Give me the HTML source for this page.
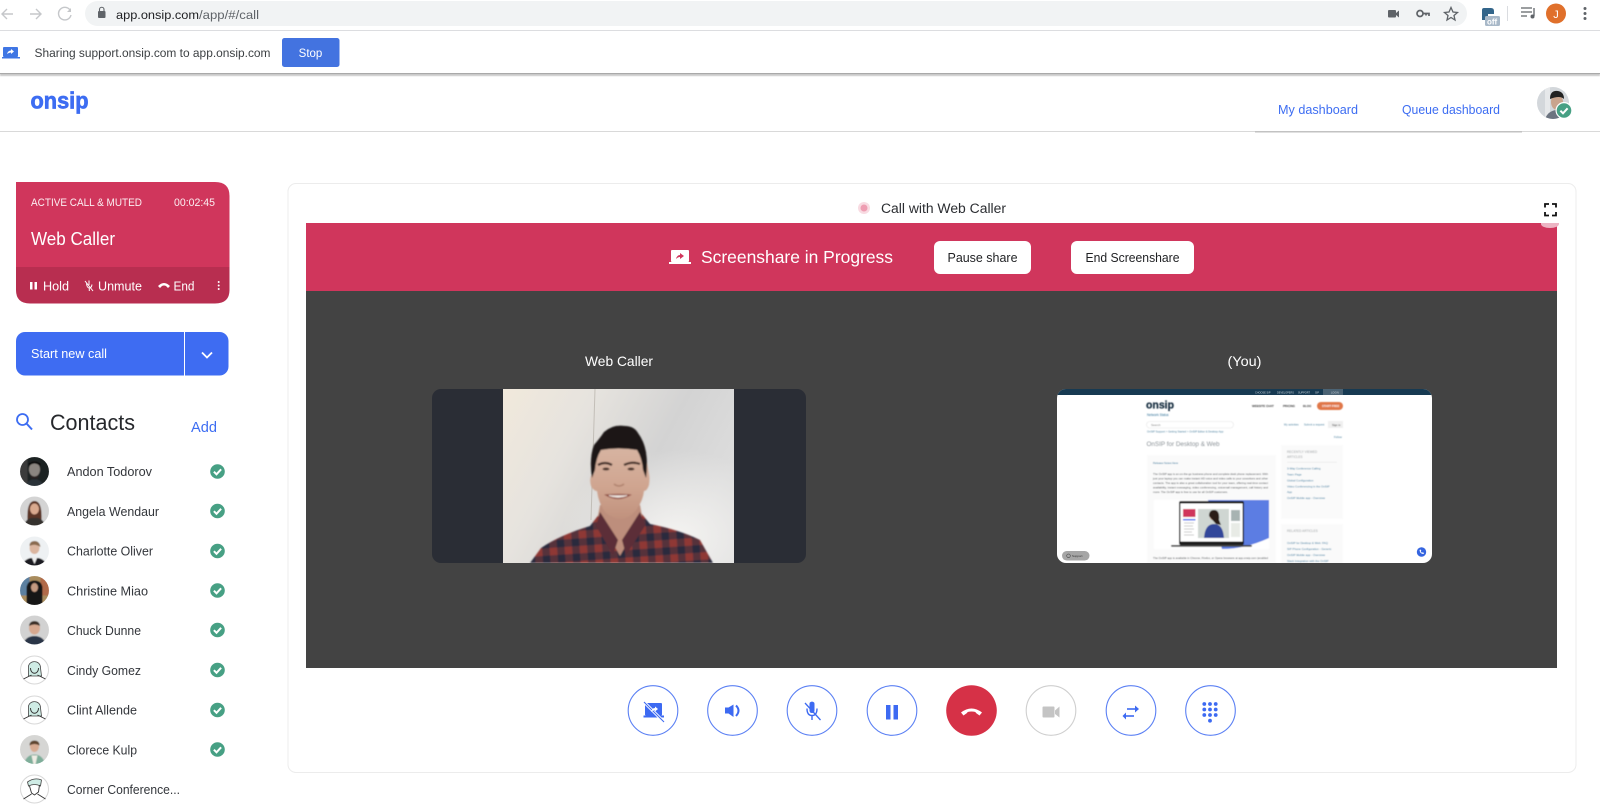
<!DOCTYPE html>
<html><head><meta charset="utf-8"><title>OnSIP</title>
<style>
html,body{margin:0;padding:0;width:1600px;height:811px;overflow:hidden;background:#fff}
svg{display:block;font-family:"Liberation Sans",sans-serif}
text{white-space:pre}
</style></head><body>
<svg width="1600" height="811" viewBox="0 0 1600 811" xmlns="http://www.w3.org/2000/svg">
<defs>
<filter id="b1" x="-20%" y="-20%" width="140%" height="140%"><feGaussianBlur stdDeviation="0.5"/></filter>
<filter id="bm" x="-10%" y="-10%" width="120%" height="120%"><feGaussianBlur stdDeviation="0.8"/></filter>
<filter id="bt" x="-5%" y="-5%" width="110%" height="110%"><feGaussianBlur stdDeviation="0.4"/></filter>
<linearGradient id="wall" x1="0" y1="0" x2="1" y2="0.4"><stop offset="0" stop-color="#f1e9dc"/><stop offset=".35" stop-color="#e6e3de"/><stop offset=".7" stop-color="#d3d3d3"/><stop offset="1" stop-color="#dcdcdc"/></linearGradient>
<radialGradient id="wall2" cx=".75" cy=".85" r=".5"><stop offset="0" stop-color="#f4f3f1"/><stop offset="1" stop-color="#f4f3f1" stop-opacity="0"/></radialGradient>
<linearGradient id="skin" x1="0" y1="0" x2="0" y2="1"><stop offset="0" stop-color="#d8b6a4"/><stop offset=".6" stop-color="#cfa48f"/><stop offset="1" stop-color="#c0917d"/></linearGradient>
<pattern id="plaid" width="15" height="15" patternUnits="userSpaceOnUse" patternTransform="rotate(-4)"><rect width="15" height="15" fill="#57303a"/><rect width="7.500" height="7.500" fill="#8f3935"/><rect x="7.500" y="7.500" width="7.500" height="7.500" fill="#2a2b3e"/></pattern>
<clipPath id="t1"><rect x="432" y="389" width="374" height="174" rx="9"/></clipPath>
<clipPath id="t2"><rect x="1057" y="389" width="375" height="174" rx="9"/></clipPath>
<clipPath id="p"><rect x="503" y="389" width="231" height="174"/></clipPath>
<clipPath id="ca"><circle cx="0" cy="0" r="14.500"/></clipPath>
<clipPath id="me"><circle cx="1553" cy="103" r="16"/></clipPath>
<g id="ok"><circle r="7.300" fill="#47a084"/><path d="M-3.600 .2 -1 2.800 3.600-2.200" fill="none" stroke="#fff" stroke-width="2"/></g>
<g id="fa"><circle r="14" fill="#fff" stroke="#d8d8d8"/><path d="M-6 -2C-7-10 6-11 6-2L7 6-6 6Z" fill="#cfece5" stroke="#444" stroke-width=".8"/><path d="M-4-2C-4 5 4 5 4-2M-3 5-11 9M3 5 11 9" fill="none" stroke="#333" stroke-width=".9"/></g>
</defs>

<!-- browser bar -->
<rect width="1600" height="31" fill="#fff"/>
<rect x="0" y="30" width="1600" height="1" fill="#dcdde0"/>
<rect x="85" y="1" width="1382" height="25" rx="12.500" fill="#f1f3f4"/>
<g fill="none" stroke="#c5c7ca" stroke-width="1.400">
<path d="M13 14H2M7 9 2 14 7 19"/><path d="M30 14H41M36 9 41 14 36 19"/>
<path d="M70 10A6.300 6.300 0 1 0 71 15"/></g>
<path d="M71 8V12H67Z" fill="#c5c7ca"/>
<rect x="98" y="11" width="7.500" height="7" rx="1" fill="#5f6368"/><path d="M99.500 11V9.500A2.200 2.200 0 0 1 104 9.500V11" fill="none" stroke="#5f6368" stroke-width="1.100"/>
<text x="116" y="19" font-size="12.300" fill="#202124" textLength="83" lengthAdjust="spacingAndGlyphs">app.onsip.com</text>
<text x="199" y="19" font-size="12.300" fill="#5f6368" textLength="60" lengthAdjust="spacingAndGlyphs">/app/#/call</text>
<rect x="1388" y="10" width="8" height="7.500" rx="1" fill="#5f6368"/><path d="M1396 13 1399 10.500V17.500L1396 15Z" fill="#5f6368"/>
<circle cx="1420" cy="13.500" r="3" fill="none" stroke="#5f6368" stroke-width="1.700"/><path d="M1423 13.500H1429V16M1426 13.500V15.500" fill="none" stroke="#5f6368" stroke-width="1.700"/>
<path d="M1451 7.500 1453 12 1457.500 12.500 1454 15.500 1455 20 1451 17.500 1447 20 1448 15.500 1444.500 12.500 1449 12Z" fill="none" stroke="#5f6368" stroke-width="1.300"/>
<path d="M1482 20V10Q1482 8 1484 8H1491Q1494 8 1494 11V14H1488V20Z" fill="#33658a"/>
<rect x="1485" y="16" width="15" height="10" rx="1.500" fill="#a8b8c8"/><text x="1487" y="24.500" font-size="8" font-weight="bold" fill="#fff">off</text>
<rect x="1507" y="6" width="1" height="15" fill="#dadce0"/>
<path d="M1521 8H1532M1521 12H1532M1521 16H1527" stroke="#5f6368" stroke-width="1.300" fill="none"/><path d="M1534 8V16" stroke="#5f6368" stroke-width="1.300"/><circle cx="1532.500" cy="16.500" r="2" fill="#5f6368"/>
<circle cx="1556" cy="13.500" r="10" fill="#e0702b"/><text x="1556" y="18" font-size="11" fill="#fff" text-anchor="middle">J</text>
<g fill="#5f6368"><circle cx="1585" cy="8.500" r="1.500"/><circle cx="1585" cy="13.500" r="1.500"/><circle cx="1585" cy="18.500" r="1.500"/></g>

<!-- sharing bar -->
<rect x="0" y="73" width="1600" height="3" fill="#c9c9c9" filter="url(#b1)"/>
<rect x="0" y="31" width="1600" height="43" fill="#fff"/>
<rect x="0" y="73" width="1600" height="1" fill="#a9a9a9"/>
<rect x="3" y="47" width="15" height="10" rx="1" fill="#3f76e4"/><rect x="2" y="57" width="18" height="1.500" fill="#3f76e4"/><path d="M7 54Q8 50.500 11 50.500V49L14 51.500 11 54V52.500Q9 52.500 7 54Z" fill="#fff"/>
<text x="34.500" y="57" font-size="12.300" fill="#3c4043" textLength="236" lengthAdjust="spacingAndGlyphs">Sharing support.onsip.com to app.onsip.com</text>
<rect x="282" y="38" width="57.500" height="29" rx="2.500" fill="#4373e0"/>
<text x="310.500" y="57" font-size="11.500" fill="#fff" text-anchor="middle">Stop</text>

<!-- header -->
<text x="30.500" y="108.300" font-size="23" font-weight="bold" fill="#3d6df2" stroke="#3d6df2" stroke-width=".7" textLength="58" lengthAdjust="spacingAndGlyphs">onsip</text>
<rect x="0" y="131" width="1600" height="1" fill="#d9d9d9"/>
<rect x="1255" y="131" width="267" height="1.500" fill="#c2c2c2"/>
<text x="1278" y="114" font-size="13" fill="#3d6df2" textLength="80" lengthAdjust="spacingAndGlyphs">My dashboard</text>
<text x="1402" y="114" font-size="13" fill="#3d6df2" textLength="98" lengthAdjust="spacingAndGlyphs">Queue dashboard</text>
<g clip-path="url(#me)"><rect x="1537" y="87" width="32" height="32" fill="#d3d7db"/><path d="M1545 87H1550V119H1545Z" fill="#e6e8ea"/><ellipse cx="1557" cy="102" rx="6" ry="8" fill="#c9a48d"/><path d="M1550 99Q1550 90 1558 91 1564 92 1564 99 1560 95 1550 99Z" fill="#222"/><path d="M1545 119Q1548 111 1556 110L1566 119Z" fill="#6c7480"/></g>
<circle cx="1564" cy="110.500" r="8.500" fill="#fff"/><use href="#ok" x="1564" y="110.500"/>

<!-- active card -->
<path d="M16 182H215Q229.500 182 229.500 196V267H16Z" fill="#d0365c"/>
<path d="M16 267H229.500V290Q229.500 303.500 215 303.500H30Q16 303.500 16 290Z" fill="#b82e50"/>
<text x="31" y="206" font-size="10.800" fill="#fff" fill-opacity=".92" textLength="111" lengthAdjust="spacingAndGlyphs">ACTIVE CALL &amp; MUTED</text>
<text x="174" y="206" font-size="10.800" fill="#fff" fill-opacity=".92" textLength="41" lengthAdjust="spacingAndGlyphs">00:02:45</text>
<text x="31" y="245" font-size="18" fill="#fff" textLength="84" lengthAdjust="spacingAndGlyphs">Web Caller</text>
<rect x="30" y="282" width="2.500" height="7.500" fill="#fff"/><rect x="34.500" y="282" width="2.500" height="7.500" fill="#fff"/>
<text x="43" y="290.500" font-size="13" fill="#fff" textLength="26" lengthAdjust="spacingAndGlyphs">Hold</text>
<path d="M85 281 93 291M89 280.500V285M86.500 283.500Q87 288 89.300 288 91.500 288 92 284.500M89.300 288V291" stroke="#fff" stroke-width="1" fill="none"/>
<text x="98" y="290.500" font-size="13" fill="#fff" textLength="44" lengthAdjust="spacingAndGlyphs">Unmute</text>
<path d="M158 286Q164 280 170 286L168 288 166 286Q164 285 162 286L160 288Z" fill="#fff"/>
<text x="173.500" y="290.500" font-size="13" fill="#fff" textLength="21" lengthAdjust="spacingAndGlyphs">End</text>
<g fill="#fff"><circle cx="218.700" cy="282" r="1"/><circle cx="218.700" cy="285.500" r="1"/><circle cx="218.700" cy="289" r="1"/></g>

<!-- start new call -->
<rect x="16" y="332" width="212.500" height="43.500" rx="9" fill="#3e6cf2"/>
<rect x="184" y="332" width="1" height="43.500" fill="#fff"/>
<text x="31" y="358" font-size="12.800" fill="#fff" textLength="76" lengthAdjust="spacingAndGlyphs">Start new call</text>
<path d="M202 352.500 207 357.500 212 352.500" fill="none" stroke="#fff" stroke-width="1.800"/>

<!-- contacts header -->
<circle cx="22.500" cy="419.500" r="5.500" fill="none" stroke="#3d6df2" stroke-width="1.800"/><path d="M26.500 423.500 32 429.500" stroke="#3d6df2" stroke-width="2"/>
<text x="50" y="430" font-size="22" fill="#26282c" textLength="85" lengthAdjust="spacingAndGlyphs">Contacts</text>
<text x="191" y="432" font-size="15" fill="#3d6df2" textLength="26" lengthAdjust="spacingAndGlyphs">Add</text>

<!-- contacts -->
<g font-size="13" fill="#33363b">
<text x="67" y="476" textLength="85" lengthAdjust="spacingAndGlyphs">Andon Todorov</text>
<text x="67" y="516" textLength="92" lengthAdjust="spacingAndGlyphs">Angela Wendaur</text>
<text x="67" y="555.500" textLength="86" lengthAdjust="spacingAndGlyphs">Charlotte Oliver</text>
<text x="67" y="595.500" textLength="81" lengthAdjust="spacingAndGlyphs">Christine Miao</text>
<text x="67" y="635" textLength="74" lengthAdjust="spacingAndGlyphs">Chuck Dunne</text>
<text x="67" y="675" textLength="74" lengthAdjust="spacingAndGlyphs">Cindy Gomez</text>
<text x="67" y="714.500" textLength="70" lengthAdjust="spacingAndGlyphs">Clint Allende</text>
<text x="67" y="754.500" textLength="70" lengthAdjust="spacingAndGlyphs">Clorece Kulp</text>
<text x="67" y="794" textLength="113" lengthAdjust="spacingAndGlyphs">Corner Conference...</text>
</g>
<use href="#ok" x="217.500" y="471.500"/><use href="#ok" x="217.500" y="511"/><use href="#ok" x="217.500" y="551"/><use href="#ok" x="217.500" y="590.500"/><use href="#ok" x="217.500" y="630"/><use href="#ok" x="217.500" y="670"/><use href="#ok" x="217.500" y="710"/><use href="#ok" x="217.500" y="749.500"/>

<g transform="translate(34.500 471.500)"><g clip-path="url(#ca)"><g filter="url(#b1)"><rect x="-15" y="-15" width="30" height="30" fill="#1e2022"/><rect x="-15" y="-15" width="8" height="30" fill="#3a3a3a"/><ellipse cy="-2" rx="5.500" ry="7" fill="#8b8580"/><path d="M-6-5Q0-11 6-5L6-8Q0-12-6-8Z" fill="#111"/><path d="M-5 3Q0 7 5 3L3 7H-3Z" fill="#2a2421"/><path d="M-10 15Q-6 7 0 8 6 7 10 15Z" fill="#2b3138"/></g></g></g>
<g transform="translate(34.500 511)"><g clip-path="url(#ca)"><g filter="url(#b1)"><rect x="-15" y="-15" width="30" height="30" fill="#d4d4d4"/><path d="M-7 10Q-8-10 0-10 8-10 7 10Z" fill="#5b3426"/><ellipse cy="-2" rx="4.500" ry="5.500" fill="#d9a98e"/><path d="M-11 15Q-8 6 0 7 8 6 11 15Z" fill="#34302e"/></g></g></g>
<g transform="translate(34.500 551)"><g clip-path="url(#ca)"><g filter="url(#b1)"><rect x="-15" y="-15" width="30" height="30" fill="#eef1f3"/><ellipse cy="-3" rx="5" ry="6" fill="#dcb6a0"/><path d="M-5-5Q-5-10 0-10 5-10 6-4 0-8-5-5Z" fill="#8a6b4f"/><path d="M-13 15Q-9 6 0 7 9 6 13 15Z" fill="#1f1f22"/><path d="M-3 6H3L0 13Z" fill="#eee"/></g></g></g>
<g transform="translate(34.500 590.500)"><g clip-path="url(#ca)"><g filter="url(#b1)"><rect x="-15" y="-15" width="30" height="30" fill="#a98c5d"/><rect x="-15" y="-15" width="10" height="20" fill="#5c80a0"/><rect x="6" y="-15" width="9" height="20" fill="#b16a4a"/><path d="M-8 15V-3Q-7-10 0-10 7-10 8-3V15Z" fill="#141214"/><ellipse cy="-3" rx="3.500" ry="4.500" fill="#c49a80"/></g></g></g>
<g transform="translate(34.500 630)"><g clip-path="url(#ca)"><g filter="url(#b1)"><rect x="-15" y="-15" width="30" height="30" fill="#d2d2d2"/><ellipse cy="-2" rx="5.500" ry="6.500" fill="#d6a88f"/><path d="M-5.500-4Q-5-9 0-9 5-9 5.500-4 0-7-5.500-4Z" fill="#3a2f28"/><path d="M-12 15Q-9 6 0 6 9 6 12 15Z" fill="#2a3446"/></g></g></g>
<use href="#fa" x="34.500" y="670"/><use href="#fa" x="34.500" y="710"/>
<g transform="translate(34.500 749.500)"><g clip-path="url(#ca)"><g filter="url(#b1)"><rect x="-15" y="-15" width="30" height="30" fill="#d6d6d4"/><ellipse cy="-3" rx="4.500" ry="5.500" fill="#d8ab92"/><path d="M-5-4Q-5-9 0-9 5-9 5-4 0-7-5-4Z" fill="#5f442f"/><path d="M-11 15Q-8 5 0 5 8 5 11 15Z" fill="#7fae9a"/><path d="M-3 6H3L1 15H-1Z" fill="#efece4"/></g></g></g>
<g transform="translate(34.500 789)"><circle r="14" fill="#fff" stroke="#d8d8d8"/><path d="M-7-7Q0-12 7-9L6-3Q0-6-6-3Z" fill="#cfece5" stroke="#444" stroke-width=".8"/><path d="M-5-3 -3 4 0 6 4 3 5-4M-3 5-11 10M3 5 11 10" fill="none" stroke="#333" stroke-width=".9"/></g>

<!-- main panel -->
<rect x="288" y="183.500" width="1288" height="589" rx="8" fill="#fff" stroke="#ececec"/>
<circle cx="864" cy="208" r="6" fill="#f8dbe2"/><circle cx="864" cy="208" r="3.500" fill="#ee9db2"/>
<text x="881" y="213" font-size="13.500" fill="#2b2d31" textLength="125" lengthAdjust="spacingAndGlyphs">Call with Web Caller</text>
<path d="M1545 207.500V204H1549M1552 204H1556V207.500M1556 212V215.500H1552M1549 215.500H1545V212" fill="none" stroke="#111" stroke-width="1.800"/>

<rect x="306" y="223" width="1251" height="68" fill="#d0365c"/>
<path d="M1541 223H1559V224A9 4 0 0 1 1541 224Z" fill="#edb5c4"/>
<rect x="306" y="291" width="1251" height="377" fill="#434343"/>
<rect x="671" y="250" width="18" height="12" rx="1" fill="#fff"/><rect x="669" y="262" width="22" height="2" fill="#fff"/><path d="M676 259Q677 255 680 255V253L684 256 680 259V257Q678 257 676 259Z" fill="#d0365c"/>
<text x="701" y="263" font-size="17.500" fill="#fff" textLength="192" lengthAdjust="spacingAndGlyphs">Screenshare in Progress</text>
<rect x="934" y="241" width="97" height="33" rx="6" fill="#fff"/>
<text x="982.500" y="262" font-size="12.500" fill="#1f2023" text-anchor="middle" textLength="70" lengthAdjust="spacingAndGlyphs">Pause share</text>
<rect x="1071" y="241" width="123" height="33" rx="6" fill="#fff"/>
<text x="1132.500" y="262" font-size="12.500" fill="#1f2023" text-anchor="middle" textLength="94" lengthAdjust="spacingAndGlyphs">End Screenshare</text>

<text x="619" y="366" font-size="14" fill="#fff" text-anchor="middle" textLength="68" lengthAdjust="spacingAndGlyphs">Web Caller</text>
<text x="1244.500" y="366" font-size="14" fill="#fff" text-anchor="middle" textLength="34" lengthAdjust="spacingAndGlyphs">(You)</text>

<!-- video tile -->
<g clip-path="url(#t1)">
<rect x="432" y="389" width="374" height="174" fill="#2a2d35"/>
<g clip-path="url(#p)">
<rect x="503" y="389" width="231" height="174" fill="url(#wall)"/>
<rect x="503" y="389" width="231" height="174" fill="url(#wall2)"/>
<path d="M595 389 591 520" stroke="#b5b0a8" stroke-width="1" opacity=".7"/>
<g filter="url(#bm)">
<path d="M530 563 541 548Q560 535 590 526L600 513H641L650 524Q680 530 700 540L713 563Z" fill="url(#plaid)"/>
<path d="M600 505 598 516 620 556 642 516 640 505Z" fill="#bd8e7b"/>
<path d="M600 512 596 526 613 555 618 540ZM640 512 645 526 626 555 622 540Z" fill="#5c2f38"/>
<path d="M591 476Q589 482 592 488 595 491 597 491 599 505 606 513 614 519 621 519 630 518 637 509 643 500 644 491 647 491 649 485 650 478 649 474L644 445Q620 438 596 445L594 474Q592 474 591 476Z" fill="url(#skin)"/>
<path d="M592 478Q589 458 594 445 600 438 604 432 613 424 625 426 634 426 638 433 644 441 646 452 648 465 646 478L643 470Q642 458 637 450 618 447 601 450 596 458 595 470Z" fill="#1d1818"/>
<path d="M598 465Q605 461 612 465M624 465Q632 461 640 464" stroke="#3a2620" stroke-width="2.200" fill="none"/>
<ellipse cx="606" cy="469" rx="3.500" ry="1.500" fill="#4a3229"/><ellipse cx="631" cy="469" rx="3.500" ry="1.500" fill="#4a3229"/>
<path d="M614 484Q619 488 624 484" stroke="#a97a66" stroke-width="1.200" fill="none"/>
<path d="M606 495Q618 502 630 495Q619 494 606 495Z" fill="#9d5a4e" stroke="#8f4d42" stroke-width="1.200"/>
<path d="M609 495.500Q618 499 627 495.500Q618 496 609 495.500Z" fill="#f3ece6" stroke="#f3ece6" stroke-width=".8"/>
</g></g></g>

<!-- screen tile -->
<g clip-path="url(#t2)">
<rect x="1057" y="389" width="375" height="174" fill="#fff"/>
<rect x="1057" y="389" width="375" height="6" fill="#173a52"/>
<rect x="1323" y="389" width="20" height="6" fill="#4b6374"/>
<g font-size="2.500" fill="#c7d1d8"><text x="1255" y="393.300">CHOOSE SIP</text><text x="1277" y="393.300">DEVELOPERS</text><text x="1298" y="393.300">SUPPORT</text><text x="1315" y="393.300">SIP</text><text x="1331" y="393.300">LOGIN</text></g>
<g filter="url(#bt)">
<text x="1146" y="408.500" font-size="11" font-weight="bold" fill="#1b3244" stroke="#1b3244" stroke-width=".3" textLength="28" lengthAdjust="spacingAndGlyphs">onsip</text>
<text x="1147" y="416" font-size="3.200" fill="#2e6f96">Network Status</text>
<g font-size="2.900" font-weight="bold" fill="#333"><text x="1252" y="407">WEBSITE CHAT</text><text x="1283" y="407">PRICING</text><text x="1303" y="407">BLOG</text></g>
<rect x="1317" y="402" width="26" height="8" rx="4" fill="#e0774a"/><text x="1322" y="407" font-size="2.800" font-weight="bold" fill="#fff">START FREE</text>
<rect x="1146.500" y="421.500" width="87" height="6.500" rx="3.200" fill="#fff" stroke="#e5e5e5" stroke-width=".6"/><text x="1151" y="426" font-size="3" fill="#777">Search</text>
<g font-size="2.700" fill="#4b7f9d"><text x="1284" y="425.500">My activities</text><text x="1304" y="425.500">Submit a request</text><text x="1147" y="432.500">OnSIP Support &gt; Getting Started &gt; OnSIP Editor &amp; Desktop App</text><text x="1334" y="438">Follow</text></g>
<rect x="1328" y="421" width="15" height="7" fill="#f0f0f0"/><text x="1332" y="426" font-size="2.800" fill="#333">Sign in</text>
<text x="1146.500" y="446" font-size="6" fill="#8a9196" textLength="73" lengthAdjust="spacingAndGlyphs">OnSIP for Desktop &amp; Web</text>
<rect x="1147" y="455" width="129" height="108" fill="#fafafa"/>
<text x="1153" y="464" font-size="2.800" fill="#2e6f96">Release Notes Here</text>
<g font-size="2.600" fill="#4a4d50">
<text x="1153" y="475" textLength="115" lengthAdjust="spacingAndGlyphs">The OnSIP app is an on-the-go business phone and complete desk phone replacement. With</text>
<text x="1153" y="479.500" textLength="115" lengthAdjust="spacingAndGlyphs">just your laptop you can make instant HD voice and video calls to your coworkers and other</text>
<text x="1153" y="484" textLength="115" lengthAdjust="spacingAndGlyphs">contacts. The app is also a great collaboration tool for your team, offering real-time contact</text>
<text x="1153" y="488.500" textLength="115" lengthAdjust="spacingAndGlyphs">availability, instant messaging, video conferencing, voicemail management, call history and</text>
<text x="1153" y="493" textLength="75" lengthAdjust="spacingAndGlyphs">more. The OnSIP app is free to use for all OnSIP customers.</text>
<text x="1153" y="559" textLength="115" lengthAdjust="spacingAndGlyphs">The OnSIP app is available in Chrome, Firefox, or Opera browsers at app.onsip.com (enabled</text>
</g>
<rect x="1154" y="500" width="115" height="49" fill="#fff"/>
<path d="M1208 500H1269V538Q1245 549 1222 549Z" fill="#5b7de3"/>
<rect x="1179" y="501" width="65" height="44" rx="2" fill="#1a1a1e"/>
<rect x="1180.500" y="503.500" width="62" height="38" fill="#fff"/>
<rect x="1183" y="509" width="12.500" height="8" fill="#d0365c"/><rect x="1183" y="519" width="12.500" height="1.500" fill="#3e6cf2"/>
<path d="M1184 523H1194M1184 526H1193M1184 529H1194M1184 532H1192M1184 535H1194" stroke="#bbb" stroke-width=".8"/>
<rect x="1198" y="509" width="31" height="29" fill="#cfd6d2"/>
<circle cx="1214" cy="516" r="4.500" fill="#b98a70"/><path d="M1209 516Q1209 510 1214 510 1220 510 1219 520L1221 525 1216 524Z" fill="#2c1e18"/><path d="M1204 538Q1205 524 1214 524 1223 524 1224 538Z" fill="#30469a"/>
<rect x="1231" y="510" width="9" height="11" fill="#a7b3b2"/><rect x="1231" y="523" width="9" height="14" fill="#e8ebe6"/>
<rect x="1171" y="545" width="81" height="1.700" rx=".8" fill="#444"/>
<rect x="1281" y="445" width="62" height="74" fill="#fafafa"/><rect x="1281" y="524" width="62" height="40" fill="#fafafa"/>
<g font-size="3.200" fill="#9da1a4"><text x="1287" y="453">RECENTLY VIEWED</text><text x="1287" y="458">ARTICLES</text><text x="1287" y="532">RELATED ARTICLES</text></g>
<rect x="1287" y="462" width="50" height=".5" fill="#e2e2e2"/>
<g font-size="2.900" fill="#3c7a9e"><text x="1287" y="469.500">3-Way Conference Calling</text><text x="1287" y="475.500">Team Page</text><text x="1287" y="481.500">Global Configuration</text><text x="1287" y="487.500">Video Conferencing in the OnSIP</text><text x="1287" y="493">App</text><text x="1287" y="499">OnSIP Mobile app - Overview</text>
<text x="1287" y="544">OnSIP for Desktop &amp; Web: FAQ</text><text x="1287" y="550">SIP Phone Configuration - Generic</text><text x="1287" y="556">OnSIP Mobile app - Overview</text><text x="1287" y="562">Slack Integration with the OnSIP</text></g>
</g>
<rect x="1062" y="551" width="27.500" height="9.500" rx="4.700" fill="#a6a6a6"/><circle cx="1068.500" cy="555.800" r="1.800" fill="none" stroke="#444" stroke-width=".6"/><text x="1072" y="557" font-size="3" fill="#333">Support</text>
<circle cx="1421.500" cy="552" r="4.700" fill="#3565e0"/><path d="M1419.500 550Q1420 554 1423.500 554L1424 553 1422.800 552.300 1422 552.800Q1421 552.300 1420.800 551.300L1421.300 550.500 1420.500 549.500Z" fill="#fff"/>
</g>

<!-- controls -->
<g fill="#fff" stroke="#5b80f4" stroke-width="1.100">
<circle cx="653" cy="710.500" r="24.800"/><circle cx="732.500" cy="710.500" r="24.800"/><circle cx="812" cy="710.500" r="24.800"/><circle cx="892" cy="710.500" r="24.800"/><circle cx="1131" cy="710.500" r="24.800"/><circle cx="1210.500" cy="710.500" r="24.800"/>
</g>
<circle cx="971.500" cy="710.500" r="25.300" fill="#d63147"/>
<circle cx="1051" cy="710.500" r="24.800" fill="#fff" stroke="#cfcfcf" stroke-width="1.100"/>
<rect x="645" y="703" width="17" height="12.500" rx="1" fill="#3d6af2"/><rect x="643.500" y="715.500" width="20.500" height="2" fill="#3d6af2"/><path d="M644 702 662 720" stroke="#fff" stroke-width="3"/><path d="M644 702 664 722" stroke="#3d6af2" stroke-width="1.100"/><path d="M651 712Q652 708 655 708V706.500L658 709 655 711.500V710Q653 710 651 712Z" fill="#fff"/>
<path d="M725 707.500H728.500L733.500 704.500V717L728.500 713.500H725Z" fill="#3d6af2"/><path d="M736 705.500Q741 710.500 736 716" fill="none" stroke="#3d6af2" stroke-width="2"/>
<path d="M805 703 820.500 720" stroke="#3d6af2" stroke-width="1.300"/><path d="M809.500 703.500A2.600 2.600 0 0 1 814.500 703.500V710.500Q814.500 713 812 713 809.500 713 809.500 710.500Z" fill="#3d6af2"/><path d="M807 708.500Q807 715.500 812 715.500 817 715.500 817 708.500M812 715.500V720" fill="none" stroke="#3d6af2" stroke-width="1.400"/>
<rect x="886" y="705" width="4.500" height="14.500" fill="#3d6af2"/><rect x="893.500" y="705" width="4.500" height="14.500" fill="#3d6af2"/>
<path d="M961 712.500Q971.500 704.500 982 712.500L979.500 715.500 976 713Q976 711.500 971.500 711.500 967 711.500 967 713L963.500 715.500Z" fill="#fff"/>
<rect x="1042.500" y="706.500" width="12" height="11" rx="1" fill="#c4c4c4"/><path d="M1055 710.500 1059.500 706.500V717.500L1055 714Z" fill="#c4c4c4"/>
<path d="M1127 709H1136" stroke="#3d6af2" stroke-width="1.600"/><path d="M1135 705.500 1139 709 1135 712.500Z" fill="#3d6af2"/><path d="M1134 716H1125" stroke="#3d6af2" stroke-width="1.600"/><path d="M1126 712.500 1122.500 716 1126 719.500Z" fill="#3d6af2"/>
<g fill="#3d6af2"><circle cx="1204.300" cy="704" r="1.900"/><circle cx="1210" cy="704" r="1.900"/><circle cx="1215.700" cy="704" r="1.900"/><circle cx="1204.300" cy="709.500" r="1.900"/><circle cx="1210" cy="709.500" r="1.900"/><circle cx="1215.700" cy="709.500" r="1.900"/><circle cx="1204.300" cy="715" r="1.900"/><circle cx="1210" cy="715" r="1.900"/><circle cx="1215.700" cy="715" r="1.900"/><circle cx="1210" cy="720.700" r="1.900"/></g>
</svg>
</body></html>
